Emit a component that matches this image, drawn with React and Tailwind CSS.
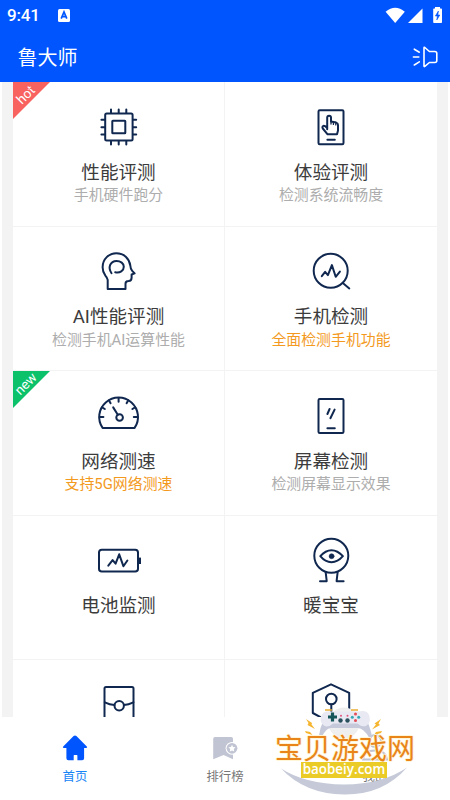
// App.jsx

import React from "react";

// Shared frame for the outlined feature icons
const LineIcon = ({ children }) => (
  <svg
    viewBox="0 0 48 48"
    className="h-12 w-12 shrink-0 overflow-visible"
    fill="none"
    stroke="#10284f"
    strokeWidth="2"
    strokeLinecap="round"
    strokeLinejoin="round"
  >
    {children}
  </svg>
);

const ChipIcon = () => (
  <LineIcon>
    <rect x="10.2" y="10.4" width="27.4" height="27" rx="1.5" />
    <rect x="17.3" y="17.7" width="13" height="12.6" rx="0.5" />
    <path d="M16 10V6.6M23.7 10V6.6M31.3 10V6.6M16 38v3.4M23.7 38v3.4M31.3 38v3.4M10 16.8H6.4M10 24.2H6.4M10 31.6H6.4M38 16.8h3.2M38 24.2h3.2M38 31.6h3.2" />
  </LineIcon>
);

const TouchIcon = () => (
  <LineIcon>
    <rect x="11.5" y="7.2" width="25" height="34" rx="1.2" />
    <path d="M20.2 26.2V14.6a1.9 1.9 0 0 1 3.8 0v4l5.2 1q1.8.5 1.8 2.3v5.6l-1 3.8h-9.4l-4.8-5.8q-1-2 .6-2.6 1.2-.4 3.8 2" />
    <path d="M24 18.6v2.4M26.4 19v2.4M28.8 19.5v2.4" strokeWidth="1.3" />
    <path d="M20.4 36.7h7.4" />
  </LineIcon>
);

const HeadIcon = () => (
  <LineIcon>
    <path d="M12.7 42V32.8Q12.4 31 10.4 28.6 7.6 25 7.6 20.2C7.6 12 14 6.2 21.3 6.2c7.6 0 13 5.2 14 12.3.2 3.2.6 4 1.9 5.4l2.4 2.5-3 1.1v3.2q0 3.2-3.1 3.4-3 0-3 2.6V42z" />
    <path d="M16.5 26.2C12.6 20.6 15.2 14 21.5 13.9c4.2 0 7.3 2.6 7.3 5.8 0 4-3.8 6.6-8.6 5.6" />
  </LineIcon>
);

const MagnifyIcon = () => (
  <LineIcon>
    <circle cx="23.7" cy="23.8" r="17" />
    <path d="M35.8 36l6.5 5.4" />
    <path d="M14.8 29.1l3.3-4.2 2.8 3.2 4-10 3.8 11.7 4.2-5.2" />
  </LineIcon>
);

const GaugeIcon = () => (
  <LineIcon>
    <path d="M7.6 35.9a19.4 19.4 0 1 1 32 0z" />
    <path d="M4.6 25h3.8M7.1 15.4l2.7 1.6M14 8.4l1.6 2.8M23.6 5.9v3.8M33.2 8.4l-1.6 2.8M40.1 15.4l-2.7 1.6M42.6 25h-3.8" />
    <circle cx="24.6" cy="25.5" r="3.3" />
    <path d="M18.2 15.4l4.6 7.4" />
  </LineIcon>
);

const ScreenIcon = () => (
  <LineIcon>
    <rect x="11.5" y="7" width="25" height="34" rx="1.2" />
    <path d="M22.6 17l-2.2 5M27.6 17.6l-4.2 8.6M20.4 36.3h7.4" />
  </LineIcon>
);

const BatteryIcon = () => (
  <LineIcon>
    <rect x="4" y="13.7" width="39" height="21.8" rx="2.8" />
    <path d="M44.6 21.6v6.4" strokeWidth="2.8" strokeLinecap="butt" />
    <path d="M13.3 29.6l4.3-5.5 3 3.6 3.6-9.4 4.2 11.9 4-5.7" />
  </LineIcon>
);

const WarmerIcon = () => (
  <LineIcon>
    <circle cx="24.3" cy="19.7" r="17" />
    <path d="M13.3 20.2q5.2-6 11.2-6t11.4 6q-5.2 6-11.4 6t-11.2-6z" />
    <circle cx="24.6" cy="20.2" r="2.5" fill="#10284f" strokeWidth="0.5" />
    <path d="M18.7 36.4l1 8.8H13M30.6 36.4l-1 8.8h7" />
  </LineIcon>
);

const PacketIcon = () => (
  <LineIcon>
    <rect x="9.5" y="6" width="29" height="37" rx="1.5" />
    <circle cx="24.2" cy="24.7" r="4.7" />
    <path d="M9.8 21.3q5 2.4 9.6 2.8M38.4 21.3q-5 2.4-9.4 2.8" />
  </LineIcon>
);

const HexagonIcon = () => (
  <LineIcon>
    <path d="M13.5 36.2L5.8 32V11.8L24 3.3l18.2 8.5V32L24 42" />
    <circle cx="24.3" cy="18" r="5.3" />
    <path d="M24.3 23.5V38" />
  </LineIcon>
);

const features = [
  { title: "性能评测", desc: "手机硬件跑分", icon: ChipIcon, badge: "hot" },
  { title: "体验评测", desc: "检测系统流畅度", icon: TouchIcon },
  { title: "AI性能评测", desc: "检测手机AI运算性能", icon: HeadIcon },
  { title: "手机检测", desc: "全面检测手机功能", icon: MagnifyIcon, highlight: true },
  { title: "网络测速", desc: "支持5G网络测速", icon: GaugeIcon, badge: "new", highlight: true },
  { title: "屏幕检测", desc: "检测屏幕显示效果", icon: ScreenIcon },
  { title: "电池监测", icon: BatteryIcon },
  { title: "暖宝宝", icon: WarmerIcon },
  { title: "", icon: PacketIcon },
  { title: "", icon: HexagonIcon },
];

// Coloured corner triangle with a slanted word
const CornerBadge = ({ type }) => (
  <div className="absolute left-0 top-0 h-[37px] w-[37px]">
    <svg viewBox="0 0 37 37" className={type === "hot" ? "text-[#f8625f]" : "text-[#0bc26b]"}>
      <path d="M0 0h37L0 37z" fill="currentColor" />
    </svg>
    <span className="absolute left-[13px] top-[12.5px] -translate-x-1/2 -translate-y-1/2 -rotate-45 text-[13.5px] leading-none text-white">
      {type}
    </span>
  </div>
);

const FeatureCell = ({ item }) => {
  const Icon = item.icon;
  return (
    <div className="relative flex h-[144.5px] flex-col items-center border-b border-[#f3f3f3] bg-white pt-[20.5px] odd:border-r">
      {item.badge && <CornerBadge type={item.badge} />}
      <Icon />
      <p className="mt-[9px] h-[26px] whitespace-nowrap text-[18.6px] leading-[26px] text-[#3c3c3c]">
        {item.title}
      </p>
      {item.desc && (
        <p
          className={`-mt-[0.5px] whitespace-nowrap text-[14.9px] leading-5 ${
            item.highlight ? "text-[#f39a1e]" : "text-[#adadad]"
          }`}
        >
          {item.desc}
        </p>
      )}
    </div>
  );
};

const Header = () => (
  <header className="h-[82px] shrink-0 bg-[#0055ff] text-white">
    <div className="flex h-[31px] items-center pl-[7px] pr-2">
      <span className="w-[33px] text-[17px] font-medium leading-none tracking-[-0.2px]">9:41</span>
      <svg viewBox="0 0 12 13" className="ml-[18px] h-[13px] w-3">
        <rect width="12" height="13" rx="1.5" fill="white" />
        <path d="M3.2 9.6L6 3l2.8 6.6M4.2 7.6h3.6" fill="none" stroke="#0055ff" strokeWidth="1.7" />
      </svg>
      <svg viewBox="0 0 57 17" className="ml-auto h-[17px] w-[57px]" fill="white">
        <path d="M0.6 4.7Q10.2-3.4 19.8 4.7L10.2 16z" />
        <path d="M37.5 1.500v14.500H23z" />
        <path d="M50 0h5v1.600h1.200q.8 0 .8.8v12.800q0 .8-.8.8H49q-.8 0-.8-.8V2.400q0-.8.8-.8h1z" />
        <path d="M53.400 4l-3 5h2l-.6 4 3-5h-2z" fill="#0055ff" stroke="#0055ff" strokeWidth="0.6" />
      </svg>
    </div>
    <div className="flex h-[51px] items-center justify-between pl-[17.5px] pr-3">
      <h1 className="pt-0.5 text-[20px] font-normal leading-none">鲁大师</h1>
      <svg
        viewBox="0 0 26 22"
        className="h-[22px] w-[26px]"
        fill="none"
        stroke="white"
        strokeWidth="1.6"
        strokeLinecap="round"
        strokeLinejoin="round"
      >
        <path d="M12 1.8q0-.8.8-.3l4.6 4h5.4q2 0 2 2v7q0 2-2 2h-5.4l-4.6 3.9q-.8.5-.8-.3z" />
        <path d="M2.3 3.2l5 3M1.4 11h5.4M2.3 19l5-3.2" />
      </svg>
    </div>
  </header>
);

const tabs = [
  {
    label: "首页",
    active: true,
    icon: (
      <path
        d="M11.6 1.1q1.4-1.2 2.8 0l10.4 10.4q1 1.4-.6 1.6h-2.1v10.2q0 2-2 2h-4.7v-4.7q0-.6-.6-.6h-2.5q-.6 0-.6.6v4.7H6.4q-2 0-2-2V13.1H1.800q-1.600-.2-.6-1.600z"
        fill="#0055ff"
      />
    ),
  },
  {
    label: "排行榜",
    icon: (
      <g fill="#c1c4d2">
        <path d="M3 2h16.2q1.8 0 1.8 1.8v20.4l-9.4-4.1L1.2 24.2V3.8Q1.2 2 3 2z" />
        <circle cx="20" cy="13.3" r="6.4" fill="white" />
        <circle cx="20" cy="13.3" r="5.4" />
        <path
          d="M20 9.7l1.1 2.3 2.5.3-1.8 1.8.4 2.5-2.2-1.2-2.2 1.2.4-2.5-1.8-1.8 2.5-.3z"
          fill="white"
        />
      </g>
    ),
  },
  {
    label: "我的",
    icon: (
      <g fill="none" stroke="#c1c4d2" strokeWidth="2">
        <circle cx="13" cy="6" r="6" />
        <path d="M1 24.500q1-9 12-9t12 9z" />
      </g>
    ),
  },
];

const TabBar = () => (
  <nav className="grid h-[83px] shrink-0 grid-cols-3 bg-white">
    {tabs.map((tab) => (
      <div key={tab.label} className="flex flex-col items-center pt-[18px]">
        <svg viewBox="0 0 26 26" className="h-[26px] w-[26px] overflow-visible">
          {tab.icon}
        </svg>
        <span
          className={`mt-[7px] text-[12.4px] leading-[18px] ${
            tab.active ? "text-[#1684f5]" : "text-[#777777]"
          }`}
        >
          {tab.label}
        </span>
      </div>
    ))}
  </nav>
);

// Site stamp floating over the bottom right corner
const SiteStamp = () => (
  <div className="absolute left-[275px] top-[705px] h-[92px] w-[142px]">
    <svg viewBox="0 0 142 92" className="absolute inset-0 h-full w-full">
      <circle cx="69" cy="18" r="15.5" fill="#efefef" />
      <path d="M6 63.500Q30 79 69 79.500q39-.5 63-17Q108 90 69 89.500 30 89 6 63.500z" fill="#c6cad8" />
      {/* gamepad */}
      <path
        d="M53 10.500h32q5 0 7.500 6 3.500 9 4.500 15 0 3-3 1-5-9-11-9.500H56q-6 .5-9 9.500-3.500 1-3-2 1-8 4.500-15 2-5 4.500-5z"
        fill="#c6c9da"
      />
      <path
        d="M56 6.500h27q10-2 11.500 5 1.500 6.500-3.500 9.500-5 1-8.500-2.500H58q-4 4-8.500 2.500-5-3-3.500-9.500 2-6 10-5z"
        fill="#e9e9f3"
      />
      <path d="M50 5h7M76 5h7" stroke="#e9ad33" strokeWidth="1.600" />
      <path d="M57.500 7.500v9M53 12h9" stroke="#15565a" strokeWidth="3.200" />
      <circle cx="65.500" cy="15.500" r="2.200" fill="#28515d" />
      <circle cx="72.500" cy="15.500" r="2.200" fill="#28515d" />
      <circle cx="66" cy="10.800" r="1" fill="#e25379" />
      <circle cx="72.500" cy="10.800" r="1" fill="#e25379" />
      <circle cx="80.500" cy="9" r="1.500" fill="#e34b55" />
      <circle cx="77.300" cy="12.200" r="1.500" fill="#35a8b5" />
      <circle cx="83.700" cy="12.200" r="1.500" fill="#35a8b5" />
      <circle cx="80.500" cy="15.400" r="1.500" fill="#e34b55" />
      {/* sparks */}
      <path
        d="M31 14l6 4-.5 1.500 3.500 4.500-7.500-4 1-2zM30 26l5 1 2.500 3-6.500-2zM106 14l-6.500 4.500 1.500 1-4 5 8-4.500-1.500-1.500zM107 26l-6 1-2 3 7-2z"
        fill="#f5b52e"
      />
    </svg>
    <p className="absolute left-0 top-[30px] whitespace-nowrap text-[28px] leading-[30px] text-[#e98518] [text-shadow:1px_0_#fff6d8,-1px_0_#fff6d8,0_1px_#fff6d8,0_-1px_#fff6d8]">
      宝贝游戏网
    </p>
    <p className="absolute left-[26px] top-[57px] h-4 w-[86px] bg-[#ebcc27] text-center font-['Open_Sans'] text-[13.4px] font-semibold leading-[15px] text-white">
      baobeiy.com
    </p>
  </div>
);

const App = () => {
  return (
    <div className="relative flex h-[800px] w-[450px] flex-col overflow-hidden bg-white font-[Roboto,'Noto_Sans_CJK_SC',sans-serif]">
      <Header />
      <main className="mx-0.5 min-h-0 flex-1 overflow-hidden bg-[#f3f3f3] px-[11px]">
        <div className="grid grid-cols-2">
          {features.map((item, index) => (
            <FeatureCell key={index} item={item} />
          ))}
        </div>
      </main>
      <TabBar />
      <SiteStamp />
    </div>
  );
};

export default App;
